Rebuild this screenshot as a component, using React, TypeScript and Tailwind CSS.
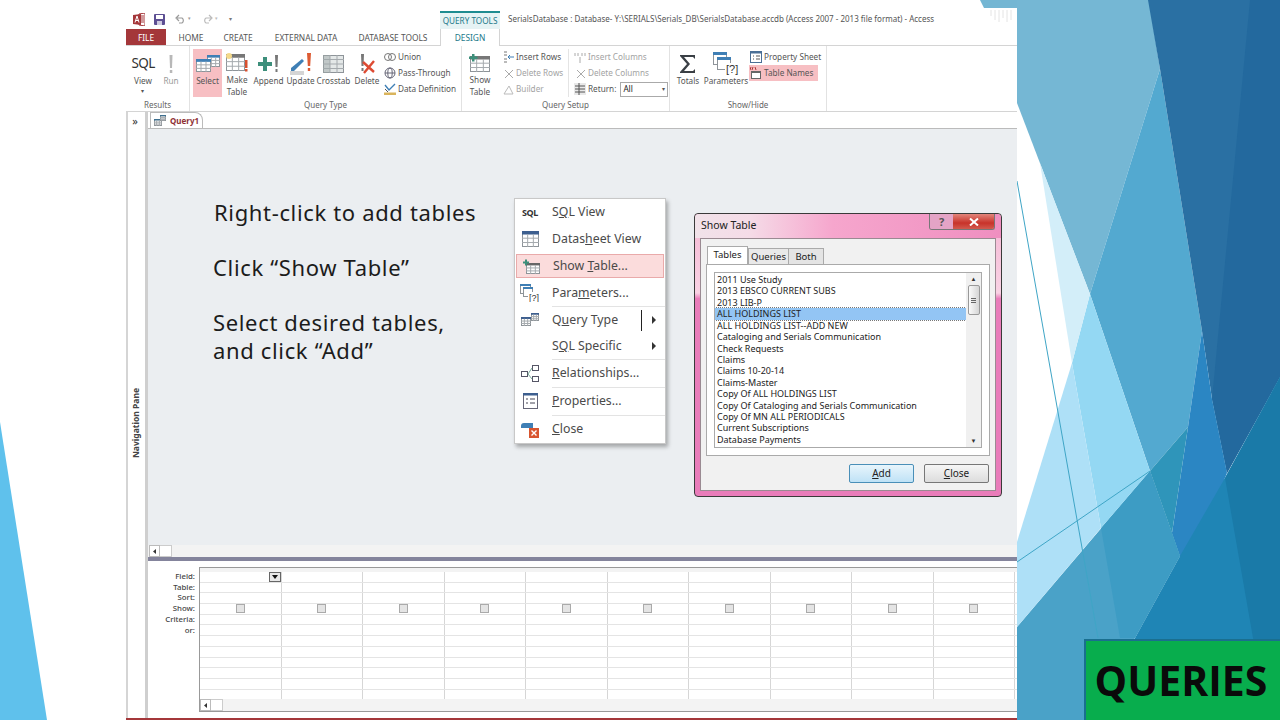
import type { ReactNode } from "react";

function Tbl({ w = 20, h = 18, head = "#5b6f8f", x = 0, y = 0 }: { w?: number; h?: number; head?: string; x?: number; y?: number }) {
  const xs = [w / 3, (2 * w) / 3];
  const ys = [h * 0.45, h * 0.72];
  return (
    <g transform={`translate(${x} ${y})`}>
      <rect x="0.5" y="0.5" width={w - 1} height={h - 1} fill="#fff" stroke="#8e9499" />
      <rect x="0" y="0" width={w} height={h * 0.22} fill={head} />
      {xs.map((v) => (
        <line key={v} x1={v} x2={v} y1={h * 0.2} y2={h} stroke="#a5aaae" />
      ))}
      {ys.map((v) => (
        <line key={v} x1="0" x2={w} y1={v} y2={v} stroke="#a5aaae" />
      ))}
    </g>
  );
}

function Big({ label, children, w, active }: { label: ReactNode; children: ReactNode; w: string; active?: boolean }) {
  return (
    <div className={`${w} h-[48px] flex flex-col items-center text-center leading-[11.5px] ${active ? "bg-[#f7bfc3]" : ""}`}>
      <div className="h-[26px] pt-[3px] flex items-center justify-center">{children}</div>
      <div>{label}</div>
    </div>
  );
}

function Small({ icon, children, muted, w }: { icon: ReactNode; children: ReactNode; muted?: boolean; w?: string }) {
  return (
    <div className={`h-[16px] shrink-0 flex items-center gap-[2px] whitespace-nowrap ${w ?? ""} ${muted ? "text-[#a3a3a3]" : ""}`}>
      <span className="w-[12px] h-[12px] flex items-center justify-center shrink-0">{icon}</span>
      {children}
    </div>
  );
}

function GroupLabel({ children }: { children: ReactNode }) {
  return <div className="h-[13px] shrink-0 text-center text-[8px] leading-[14px] text-[#666]">{children}</div>;
}

function Ribbon() {
  return (
    <div className="h-[66px] flex border-b border-[#d4d4d4] bg-white text-[8.2px] text-[#555] font-['Noto_Sans',sans-serif]">
      {/* Results */}
      <div className="w-[64px] flex flex-col border-r border-[#e2e2e2]">
        <div className="flex flex-1 pl-[3px] pt-[3px]">
          <Big w="w-[28px]" label={<>View<div className="text-[6px] leading-[8px]">▾</div></>}>
            <span className="text-[13.5px] tracking-[-0.6px] text-[#333]">SQL</span>
          </Big>
          <Big w="w-[28px]" label={<span className="text-[#999]">Run</span>}>
            <svg width="8" height="20" viewBox="0 0 8 20"><path d="M2.5 1h3L5 14H3z" fill="#b8b8b8" /><rect x="2.8" y="16" width="2.5" height="3" fill="#b8b8b8" /></svg>
          </Big>
        </div>
        <GroupLabel>Results</GroupLabel>
      </div>
      {/* Query Type */}
      <div className="w-[272px] flex flex-col border-r border-[#e2e2e2]">
        <div className="flex flex-1 pl-[3px] pt-[3px]">
          <Big active w="w-[29px]" label="Select">
            <svg width="24" height="20" viewBox="0 0 24 20"><Tbl w={13} h={12} x={11} y={1} head="#3f7fb5" /><Tbl w={15} h={13} x={0} y={5} head="#3f7fb5" /></svg>
          </Big>
          <Big w="w-[30px]" label={<>Make<br />Table</>}>
            <svg width="24" height="22" viewBox="0 0 24 22"><Tbl w={19} h={17} x={1} y={2} head="#777" /><circle cx="4" cy="4" r="3" fill="#f4d98a" /><rect x="20" y="8" width="2.5" height="8" fill="#d8502f" /><rect x="20" y="17" width="2.5" height="2.5" fill="#d8502f" /></svg>
          </Big>
          <Big w="w-[33px]" label="Append">
            <svg width="24" height="20" viewBox="0 0 24 20"><path d="M1 8h5V3h4v5h5v4h-5v5H6v-5H1z" fill="#3d8f7b" /><path d="M18 1h3l-.5 12h-2z" fill="#777" /><rect x="18.5" y="15" width="2" height="3" fill="#777" /></svg>
          </Big>
          <Big w="w-[31px]" label="Update">
            <svg width="24" height="22" viewBox="0 0 24 22"><path d="M2 15l11-9 2 2L5 18H2z" fill="#3f7fb5" /><path d="M1 19h14M1 21h14" stroke="#aaa" /><path d="M18 0h4l-.8 13h-2.4z" fill="#dd5b33" /><rect x="18.8" y="15" width="2.4" height="3" fill="#dd5b33" /></svg>
          </Big>
          <Big w="w-[35px]" label="Crosstab">
            <svg width="21" height="18" viewBox="0 0 21 18"><rect x="0.5" y="0.5" width="20" height="17" fill="#e4e8e8" stroke="#8e9499" /><path d="M7 0v18M14 0v18M0 4.5h21M0 9h21M0 13.5h21" stroke="#a5aaae" /><rect x="0" y="0" width="7" height="18" fill="#9ea7a8" opacity=".5" /></svg>
          </Big>
          <Big w="w-[32px]" label="Delete">
            <svg width="20" height="22" viewBox="0 0 20 22"><path d="M4 1h3l-.5 12h-2z" fill="#777" /><rect x="4.5" y="15" width="2" height="3" fill="#777" /><path d="M6 9l11 10M17 8L7 20" stroke="#dd4b33" strokeWidth="2.4" /></svg>
          </Big>
          <div className="flex flex-col pl-[1px]">
            <Small icon={<svg width="12" height="10" viewBox="0 0 12 10"><circle cx="4" cy="5" r="3.5" fill="none" stroke="#777" /><circle cx="8" cy="5" r="3.5" fill="none" stroke="#777" /></svg>}>Union</Small>
            <Small icon={<svg width="12" height="12" viewBox="0 0 12 12"><circle cx="6" cy="6" r="5" fill="none" stroke="#667" /><ellipse cx="6" cy="6" rx="2.2" ry="5" fill="none" stroke="#667" /><path d="M1 6h10" stroke="#667" /></svg>}>Pass-Through</Small>
            <Small icon={<svg width="12" height="12" viewBox="0 0 12 12"><path d="M1 2l4 5 6-6" fill="none" stroke="#3f7fb5" strokeWidth="1.4" /><path d="M1 6l3 3" stroke="#555" /><rect x="0" y="9.5" width="12" height="2.5" fill="#d9b45c" /></svg>}>Data Definition</Small>
          </div>
        </div>
        <GroupLabel>Query Type</GroupLabel>
      </div>
      {/* Query Setup */}
      <div className="w-[208px] flex flex-col border-r border-[#e2e2e2]">
        <div className="flex flex-1 pl-[3px] pt-[3px]">
          <Big w="w-[30px]" label={<>Show<br />Table</>}>
            <svg width="22" height="20" viewBox="0 0 22 20"><Tbl w={20} h={16} x={1} y={3} head="#777" /><path d="M0 3.5h3V1h2.5v2.5h3V6h-3v2.5H3V6H0z" fill="#3d8f7b" /></svg>
          </Big>
          <div className="flex flex-col pl-[7px] w-[74px] border-r border-[#e4e4e4] h-[48px]">
            <Small icon={<svg width="11" height="12" viewBox="0 0 11 12"><path d="M1 1h3M1 4h3M1 8h3M1 11h3" stroke="#777" /><path d="M5 6h6M7 4L5 6l2 2" fill="none" stroke="#3f7fb5" /></svg>}>Insert Rows</Small>
            <Small muted icon={<svg width="11" height="11" viewBox="0 0 11 11"><path d="M2 2l8 8M10 2l-8 8" stroke="#aaa" /></svg>}>Delete Rows</Small>
            <Small muted icon={<svg width="11" height="11" viewBox="0 0 11 11"><path d="M1 10L6 2l4 8z" fill="none" stroke="#bbb" /></svg>}>Builder</Small>
          </div>
          <div className="flex flex-col pl-[5px] h-[48px]">
            <Small muted icon={<svg width="12" height="11" viewBox="0 0 12 11"><path d="M1 1v3M4 1v3M8 1v3M11 1v3M6 11V5" stroke="#aaa" /></svg>}>Insert Columns</Small>
            <Small muted icon={<svg width="11" height="11" viewBox="0 0 11 11"><path d="M2 2l8 8M10 2l-8 8" stroke="#aaa" /></svg>}>Delete Columns</Small>
            <div className="h-[16px] shrink-0 flex items-center gap-[2px]">
              <svg width="12" height="12" viewBox="0 0 12 12"><rect width="12" height="12" fill="#e9e9e9" /><path d="M1 3h10M1 6h10M1 9h10M5 0v12" stroke="#555" /></svg>
              Return:
              <div className="ml-[2px] w-[48px] h-[15px] border border-[#aaa] flex items-center justify-between px-[2px] text-[#222]">All<span className="text-[6px] text-[#555]">▾</span></div>
            </div>
          </div>
        </div>
        <GroupLabel>Query Setup</GroupLabel>
      </div>
      {/* Show/Hide */}
      <div className="w-[157px] flex flex-col border-r border-[#e2e2e2]">
        <div className="flex flex-1 pl-[3px] pt-[3px]">
          <Big w="w-[30px]" label="Totals">
            <svg width="18" height="20" viewBox="0 0 18 20"><path d="M1 1h15v4l-2-2H5l6 7-6 7h9l2-2v4H1v-1l7-8-7-8z" fill="#3a3f45" /></svg>
          </Big>
          <Big w="w-[46px]" label="Parameters">
            <svg width="27" height="23" viewBox="0 0 27 23"><rect x="0.5" y="0.5" width="13" height="12" fill="#fff" stroke="#8e9499" /><rect width="14" height="3" fill="#3f7fb5" /><rect x="4.5" y="5.5" width="13" height="12" fill="#fff" stroke="#8e9499" /><rect x="4" y="5" width="14" height="3" fill="#3f7fb5" /><rect x="12" y="11" width="14" height="12" fill="#fff" /><text x="13" y="21" fontSize="11" fill="#333" fontFamily="Liberation Sans">[?]</text></svg>
          </Big>
          <div className="flex flex-col pl-[1px]">
            <Small icon={<svg width="12" height="12" viewBox="0 0 12 12"><rect x="0.5" y="0.5" width="11" height="11" fill="#fff" stroke="#4a6f96" /><rect width="12" height="2.5" fill="#4a6f96" /><path d="M3 5h1M6 5h4M3 8h1M6 8h4" stroke="#555" /></svg>}>Property Sheet</Small>
            <div className="bg-[#f7bfc3] w-[69px] -ml-[1px] pl-[1px]">
              <Small icon={<svg width="12" height="12" viewBox="0 0 12 12"><path d="M0 3l1-3M3 0l-1 3M5 0l1 3" stroke="#a33" /><rect x="1.5" y="4.5" width="9" height="7" fill="#fff" stroke="#666" /><rect x="1" y="4" width="10" height="2" fill="#666" /></svg>}>Table Names</Small>
            </div>
          </div>
        </div>
        <GroupLabel>Show/Hide</GroupLabel>
      </div>
    </div>
  );
}

function Row({ h, icon, children, sep, active, arrow, cursor }: { h: string; icon?: ReactNode; children: ReactNode; sep?: boolean; active?: boolean; arrow?: boolean; cursor?: boolean }) {
  return (
    <div className={`${h} flex items-stretch`}>
      <div className={`flex-1 flex items-stretch ${active ? "bg-[#fbdcdc] border border-[#e9aaaa] mx-[1px] my-[2px]" : ""}`}>
        <div className={`${active ? "w-[36px]" : "w-[37px]"} flex items-center justify-center pr-[7px] shrink-0`}>{icon}</div>
        <div className={`flex-1 flex items-center justify-between pr-[9px] ${sep ? "border-t border-[#e3e3e3]" : ""}`}>
          <span>{children}</span>
          {arrow && (
            <span className="flex items-center gap-[10px]">
              {cursor && <span className="w-[1px] h-[21px] bg-[#222]" />}
              <svg width="4" height="8" viewBox="0 0 4 8"><path d="M0 0l4 4-4 4z" fill="#333" /></svg>
            </span>
          )}
        </div>
      </div>
    </div>
  );
}

function ContextMenu() {
  return (
    <div className="absolute left-[514px] top-[198px] w-[152px] bg-white border border-[#c8c8c8] shadow-[2px_3px_4px_rgba(0,0,0,0.3)] text-[12.3px] text-[#4a4a4a] font-['Noto_Sans',sans-serif]">
      <Row h="h-[27px]" icon={<span className="text-[9px] font-bold tracking-[-0.4px] text-[#333]">SQL</span>}>S<u>Q</u>L View</Row>
      <Row h="h-[26px]" icon={<svg width="17" height="16" viewBox="0 0 17 16"><Tbl w={17} h={16} head="#3d5f8f" /></svg>}>Datas<u>h</u>eet View</Row>
      <Row h="h-[28px]" active icon={<svg width="17" height="15" viewBox="0 0 17 15"><Tbl w={14} h={11} x={3} y={4} head="#666" /><path d="M0 2.5h2V.5h2v2h2v2H4v2H2v-2H0z" fill="#3d8f7b" /></svg>}>Show <u>T</u>able...</Row>
      <Row h="h-[26px]" icon={<svg width="20" height="18" viewBox="0 0 20 18"><rect x="0.5" y="0.5" width="10" height="9" fill="#fff" stroke="#8e9499" /><rect width="11" height="2" fill="#3f7fb5" /><rect x="3.5" y="3.5" width="9" height="9" fill="#fff" stroke="#8e9499" /><rect x="3" y="3" width="10" height="2" fill="#3f7fb5" /><rect x="8" y="8" width="12" height="10" fill="#fff" /><text x="9" y="16.500" fontSize="9" fill="#333" fontFamily="Liberation Sans">[?]</text></svg>}>Para<u>m</u>eters...</Row>
      <Row h="h-[27px]" sep arrow cursor icon={<svg width="18" height="13" viewBox="0 0 18 13"><Tbl w={10} h={9} x={0} y={4} head="#3d5f8f" /><Tbl w={8} h={8} x={10} y={0} head="#3d5f8f" /></svg>}>Q<u>u</u>ery Type</Row>
      <Row h="h-[26px]" arrow>S<u>Q</u>L Specific</Row>
      <Row h="h-[28px]" sep icon={<svg width="18" height="17" viewBox="0 0 18 17"><rect x="0.5" y="6.5" width="6" height="5" fill="#fff" stroke="#556" /><rect x="11.5" y="0.5" width="6" height="5" fill="#fff" stroke="#556" /><rect x="11.5" y="11.5" width="6" height="5" fill="#fff" stroke="#556" /><path d="M7 9l4-6M7 9l4 5" stroke="#7a9" /></svg>}><u>R</u>elationships...</Row>
      <Row h="h-[28px]" sep icon={<svg width="15" height="16" viewBox="0 0 15 16"><rect x="0.5" y="0.5" width="14" height="15" fill="#fff" stroke="#667" /><rect width="15" height="2.5" fill="#3d5f8f" /><path d="M3 6h2M7 6h5M3 10h2M7 10h5" stroke="#445" /></svg>}><u>P</u>roperties...</Row>
      <Row h="h-[28px]" sep icon={<svg width="18" height="17" viewBox="0 0 18 17"><path d="M0 5q0-3 3-3h9v5H0z" fill="#3f7fb5" /><rect x="8" y="7" width="10" height="10" fill="#d8552f" /><path d="M10.500 9.500l5 5M15.500 9.500l-5 5" stroke="#fff" strokeWidth="1.4" /></svg>}><u>C</u>lose</Row>
    </div>
  );
}

const tables = [
  "2011 Use Study",
  "2013 EBSCO CURRENT SUBS",
  "2013 LIB-P",
  "ALL HOLDINGS LIST",
  "ALL HOLDINGS LIST--ADD NEW",
  "Cataloging and Serials Communication",
  "Check Requests",
  "Claims",
  "Claims 10-20-14",
  "Claims-Master",
  "Copy Of ALL HOLDINGS LIST",
  "Copy Of Cataloging and Serials Communication",
  "Copy Of MN ALL PERIODICALS",
  "Current Subscriptions",
  "Database Payments",
];

function ShowTable() {
  return (
    <div className="absolute left-[694px] top-[213px] w-[308px] h-[284px] rounded-[4px] border border-[#3a3a3a] flex flex-col px-[5px] pb-[5px] bg-[linear-gradient(to_bottom,#f4b7d3_0%,#f9d2e4_28%,#e97cba_30%,#e97cba_100%)] text-[9.5px] text-[#222] font-['Noto_Sans',sans-serif]">
      <div className="relative h-[24px] -mx-[5px] px-[6px] flex items-center rounded-t-[4px] bg-[linear-gradient(to_right,#f1e2e9_0%,#f5dbe7_18%,#f6a6cd_45%,#ef8fc0_100%)] text-[10.5px]">
        Show Table
        <div className="absolute right-[6px] top-0 flex h-[16px] rounded-b-[3px] overflow-hidden border border-t-0 border-[#777]">
          <span className="w-[23px] bg-[#e4a4c6] text-center text-[#555] font-bold text-[11px] leading-[15px]">?</span>
          <span className="w-[41px] bg-[linear-gradient(to_bottom,#e2857b,#c8332a_60%,#d25a4e)] flex items-center justify-center">
            <svg width="10" height="8" viewBox="0 0 10 8"><path d="M1 .5l8 7M9 .5l-8 7" stroke="#fff" strokeWidth="2" /></svg>
          </span>
        </div>
      </div>
      <div className="flex-1 bg-[#f1f1f1] border border-[#9a8a92] px-[5px] pt-[7px] flex flex-col">
        <div className="flex h-[18px] items-end pl-[1px]">
          <div className="w-[41px] h-[18px] bg-white border border-b-0 border-[#aaa] text-center leading-[15px]">Tables</div>
          <div className="w-[41px] h-[16px] bg-[#e9e9e9] border border-b-0 border-[#aaa] text-center leading-[15px]">Queries</div>
          <div className="w-[35px] h-[16px] bg-[#e4e4e4] border border-b-0 border-l-0 border-[#aaa] text-center leading-[15px]">Both</div>
        </div>
        <div className="h-[192px] bg-white border border-[#aaa] p-[7px]">
          <div className="h-[176px] border border-[#aaa] flex overflow-hidden">
            <div className="flex-1 pt-[1px] text-[9px] leading-[11.43px] whitespace-nowrap">
              {tables.map((t) => (
                <div key={t} className={`pl-[2px] h-[11.43px] ${t === "ALL HOLDINGS LIST" ? "bg-[#93c5f4] outline-1 outline-dotted outline-[#777]" : ""}`}>{t}</div>
              ))}
            </div>
            <div className="w-[15px] bg-[#f0f0f0] flex flex-col items-center text-[6px] text-[#333] leading-[12px]">
              <span className="h-[12px]">▲</span>
              <div className="w-[12px] h-[30px] bg-[linear-gradient(to_right,#fafafa,#d5d5d5)] border border-[#999] rounded-[2px] flex flex-col justify-center items-center gap-[1px]">
                <i className="block w-[5px] h-[1px] bg-[#666]" /><i className="block w-[5px] h-[1px] bg-[#666]" /><i className="block w-[5px] h-[1px] bg-[#666]" />
              </div>
              <span className="mt-auto h-[12px]">▼</span>
            </div>
          </div>
        </div>
        <div className="flex justify-end gap-[10px] pt-[8px] pr-[1px] text-[10px]">
          <div className="w-[65px] h-[19px] rounded-[2px] border border-[#4a8fb8] bg-[linear-gradient(to_bottom,#e8f5fc,#bfe2f6)] text-center leading-[17px]"><u>A</u>dd</div>
          <div className="w-[65px] h-[19px] rounded-[2px] border border-[#777] bg-[linear-gradient(to_bottom,#f6f6f6,#dcdcdc)] text-center leading-[17px]"><u>C</u>lose</div>
        </div>
      </div>
    </div>
  );
}

const labels = ["Field:", "Table:", "Sort:", "Show:", "Criteria:", "or:"];
const cols = [0, 1, 2, 3, 4, 5, 6, 7, 8, 9, 10];
const rows = [0, 1, 2, 3, 4, 5, 6, 7, 8, 9, 10, 11];

function ScrollStub() {
  return (
    <div className="flex h-[12px]">
      <div className="w-[11px] h-[12px] bg-white border border-[#bbb] flex items-center justify-center"><svg width="3" height="5" viewBox="0 0 3 5"><path d="M3 0L0 2.500 3 5z" fill="#333" /></svg></div>
      <div className="w-[12px] h-[12px] bg-white border border-l-0 border-[#ccc]" />
    </div>
  );
}

function QueryGrid() {
  return (
    <div className="h-[157px] flex pt-[6px] bg-white overflow-hidden">
      <div className="w-[51px] pt-[4px] pr-[4px] text-right text-[7.8px] font-medium text-[#444] leading-[10.7px] font-['Noto_Sans',sans-serif] shrink-0">
        {labels.map((l) => <div key={l}>{l}</div>)}
      </div>
      <div className="flex-1 h-[145px] border-l border-t border-b border-[#999] flex flex-col overflow-hidden">
        <div className="flex-1 relative overflow-hidden">
          <div className="h-[4px] bg-[#f3f3f3]" />
          {rows.map((r) => (
            <div key={r} className="h-[10.7px] border-b border-[#e4e4e4] flex">
              {cols.map((c) => (
                <div key={c} className="w-[81.5px] shrink-0 border-r border-[#d6d6d6] flex items-center justify-center">
                  {r === 3 && <span className="w-[9px] h-[9px] bg-[#e4e4e4] border border-[#aaa]" />}
                </div>
              ))}
            </div>
          ))}
          <div className="absolute left-[69px] top-[4px] w-[12px] h-[10px] bg-[#e8e8e8] border border-[#666] flex items-center justify-center">
            <svg width="6" height="4" viewBox="0 0 6 4"><path d="M0 0h6L3 4z" fill="#111" /></svg>
          </div>
        </div>
        <div className="h-[12px] bg-[#f3f3f3]"><ScrollStub /></div>
      </div>
    </div>
  );
}

function AccessWindow() {
  return (
    <div className="w-[891px] h-[712px] mt-[8px] flex flex-col bg-white font-['Noto_Sans',sans-serif] overflow-hidden">
      {/* quick access + title */}
      <div className="h-[21px] flex items-end text-[8px] text-[#555]">
        <div className="w-[314px] h-[21px] flex items-center pl-[7px] pt-[1px] gap-[9px]">
          <svg width="12" height="13" viewBox="0 0 12 13"><path d="M6 1l6-1v13l-6-1z" fill="#fff" stroke="#a4373a" /><path d="M8 3h3M8 5h3M8 7h3M8 9h3" stroke="#a4373a" /><path d="M0 2l8-1v11l-8-1z" fill="#a4373a" /><path d="M2 9.500l2-6.500 2 6.500M2.800 7.500h2.400" fill="none" stroke="#fff" strokeWidth="1" /></svg>
          <svg width="11" height="11" viewBox="0 0 11 11"><rect width="11" height="11" rx="1" fill="#5d4f93" /><rect x="2" y="1" width="7" height="4" fill="#fff" /><rect x="3" y="7" width="5" height="4" fill="#cfcbe0" /></svg>
          <span className="flex items-center gap-[2px] ml-[1px] text-[#9a9a9a]">
            <svg width="11" height="10" viewBox="0 0 11 10"><path d="M2 4h5a3 3 0 0 1 0 5H4M4 1L1 4l3 3" fill="none" stroke="#9a9a9a" strokeWidth="1.2" /></svg>
            <span className="text-[5px]">▾</span>
          </span>
          <span className="flex items-center gap-[2px] ml-[2px] text-[#bbb]">
            <svg width="11" height="10" viewBox="0 0 11 10"><path d="M9 4H4a3 3 0 0 0 0 5h3M7 1l3 3-3 3" fill="none" stroke="#bbb" strokeWidth="1.2" /></svg>
            <span className="text-[5px]">▾</span>
          </span>
          <span className="ml-[2px] text-[6px] text-[#777]">▾</span>
        </div>
        <div className="w-[60px] h-[18px] border-t-2 border-[#1e8c90] bg-[#e6f3f4] text-[#23798a] text-center leading-[16px] text-[8.2px] whitespace-nowrap">QUERY TOOLS</div>
        <div className="pl-[8px] h-[18px] leading-[16px] whitespace-nowrap">SerialsDatabase : Database- Y:\SERIALS\Serials_DB\SerialsDatabase.accdb (Access 2007 - 2013 file format) - Access</div>
        <svg className="ml-auto mr-[3px]" width="24" height="21" viewBox="0 0 24 21"><path d="M1 2v6M5 2v10M9 2v12M13 2v8M17 2v12M21 2v10" stroke="#e4e4e4" /></svg>
      </div>
      {/* tabs */}
      <div className="h-[17px] flex items-stretch text-[8.4px] text-[#555] leading-[17px] border-b border-[#d4d4d4]">
        <div className="w-[40px] bg-[#a4373a] text-white text-center">FILE</div>
        <div className="w-[50px] text-center">HOME</div>
        <div className="w-[44px] text-center">CREATE</div>
        <div className="w-[92px] text-center">EXTERNAL DATA</div>
        <div className="w-[82px] text-center">DATABASE TOOLS</div>
        <div className="w-[60px] h-[18px] ml-[6px] bg-white border-x border-[#d4d4d4] text-[#23798a] text-center">DESIGN</div>
      </div>
      <Ribbon />
      {/* main */}
      <div className="flex-1 flex min-h-0 border-b-2 border-[#a4373a]">
        <div className="w-[22px] shrink-0 border-l-2 border-[#d5d5d5] border-r-[3px] border-r-[#cfcfcf] flex flex-col items-center text-[#333]">
          <span className="pt-[1px] pr-[3px] text-[11px] leading-[16px]">»</span>
          <div className="flex-1 flex items-center justify-center">
            <span className="[writing-mode:vertical-rl] rotate-180 text-[8.5px] font-bold text-[#444]">Navigation Pane</span>
          </div>
        </div>
        <div className="flex-1 flex flex-col min-w-0">
          <div className="h-[17px] flex items-end pl-[2px] border-b border-[#bbb] bg-white">
            <div className="w-[53px] h-[16px] flex items-center gap-[4px] pl-[3px] border border-b-0 border-[#bbb] rounded-tr-[8px] bg-white">
              <svg width="12" height="11" viewBox="0 0 12 11"><Tbl w={8} h={7} x={0} y={4} head="#3d6f8f" /><Tbl w={6} h={6} x={6} y={0} head="#3d6f8f" /></svg>
              <span className="text-[8px] font-bold text-[#8e2f33] leading-none">Query1</span>
            </div>
          </div>
          {/* slide notes */}
          <div className="h-[416px] bg-[#ebeef1] pl-[65px] pt-[69px] text-[22px] tracking-[0.65px] leading-[28px] text-[#1c1c1c]">
            <p className="pl-[1px]">Right-click to add tables</p>
            <p className="mt-[27px]">Click “Show Table”</p>
            <p className="mt-[27px]">Select desired tables,<br />and click “Add”</p>
          </div>
          <div className="h-[12px] bg-[#f3f3f3] pl-[1px]"><ScrollStub /></div>
          <div className="h-[4px] bg-[#84849c]" />
          <QueryGrid />
        </div>
      </div>
    </div>
  );
}

function SlideBackground() {
  return (
    <svg className="absolute inset-0" width="1280" height="720" viewBox="0 0 1280 720">
      <polygon points="0,422 47,720 0,720" fill="#5fc1ec" />
      <polygon points="980,0 1017,0 1017,10 985,10" fill="#74b6d3" />
      <polygon points="1017,0 1149,0 1160,69 1090,294 1017,103" fill="#75b7d4" />
      <polygon points="1160,69 1202,331 1188,427 1150,471 1090,294" fill="#53a9d0" />
      <polygon points="1148,0 1280,0 1280,377 1227,473 1212,399 1202,331 1160,69" fill="#2a70a3" />
      <polygon points="1250,0 1280,0 1280,377 1227,473 1212,399" fill="#23699e" />
      <polygon points="1280,377 1225,478 1172,533 1180,556 1135,638 1085,720 1280,720" fill="#1f85b5" />
      <polygon points="1280,377 1225,478 1253,638 1280,720" fill="#1a7aa8" />
      <polygon points="1202,331 1212,399 1227,473 1225,478 1180,556 1172,533 1188,427" fill="#2b86c3" />
      <polygon points="1180,556 1172,533 1150,471 1017,627 1017,720 1085,720 1135,638" fill="#4aa2c8" />
      <polygon points="1101,528 1150,471 1172,533 1180,556 1135,638 1120,638" fill="#3d9cc4" />
      <polygon points="1150,471 1188,427 1172,533" fill="#2f95ba" />
      <polygon points="1090,294 1150,471 1101,528 1072,363" fill="#94d8f3" />
      <polygon points="1072,363 1017,542 1017,627 1101,528" fill="#aee0f7" />
      <polygon points="1040,163 1090,294 1072,363" fill="#d3eef9" />
      <line x1="1017" y1="181" x2="1098" y2="638" stroke="#3fa5c6" strokeWidth="1" />
      <line x1="1017" y1="562" x2="1150" y2="471" stroke="#3fa5c6" strokeWidth="1" />
    </svg>
  );
}

export default function App() {
  return (
    <div className="relative w-[1280px] h-[720px] overflow-hidden bg-white pl-[126px]">
      <SlideBackground />
      <div className="relative">
        <AccessWindow />
      </div>
      <ContextMenu />
      <ShowTable />
      {/* title badge */}
      <div className="absolute left-[1084px] top-[639px] w-[196px] h-[81px] pr-[4px] bg-[#08ad4d] border-2 border-r-0 border-b-0 border-[#1a6f8f] flex items-center justify-center text-[41px] font-bold text-[#0a0a0a] font-['Open_Sans',sans-serif]">
        QUERIES
      </div>
    </div>
  );
}
